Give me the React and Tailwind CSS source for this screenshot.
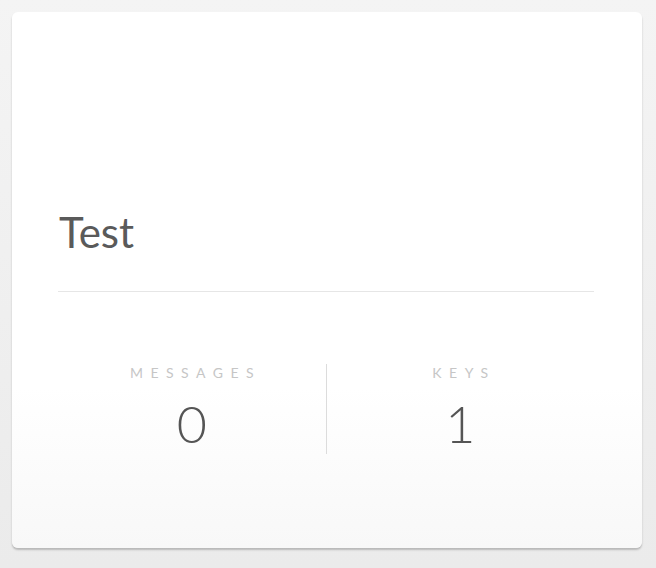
export default function App() {
  return (
    <div
      className="h-[568px] w-full bg-gradient-to-b from-[#f4f4f4] to-[#ebebeb] pt-3 pl-3 pr-[14px]"
      style={{ fontFamily: "Lato, 'Open Sans', sans-serif" }}
    >
      <div className="h-[536px] rounded-[6px] bg-gradient-to-b from-white via-white via-70% to-[#f8f8f8] shadow-[0_2px_2px_rgba(0,0,0,0.22)] pl-[46px] pr-[48px] pt-[195px]">
        <div className="text-[42px] leading-[50px] text-[#5a5a5a] pl-px">Test</div>
        <div className="mt-[34px] h-px bg-[#e6e6e6]" />
        <div className="mt-[72px] flex">
          <div className="flex-1 flex flex-col items-center">
            <div className="text-[14px] leading-[16px] tracking-[7.5px] pl-[7.5px] text-[#c6c6c6] mt-px">MESSAGES</div>
            <div className="mt-[16px] text-[52px] leading-[52px] font-light text-[#555555]">0</div>
          </div>
          <div className="w-px h-[90px] bg-[#dcdcdc]" />
          <div className="flex-1 flex flex-col items-center">
            <div className="text-[14px] leading-[16px] tracking-[7.5px] pl-[7.5px] text-[#c6c6c6] mt-px">KEYS</div>
            <div className="mt-[16px] text-[52px] leading-[52px] font-light text-[#555555]">1</div>
          </div>
        </div>
      </div>
    </div>
  );
}
